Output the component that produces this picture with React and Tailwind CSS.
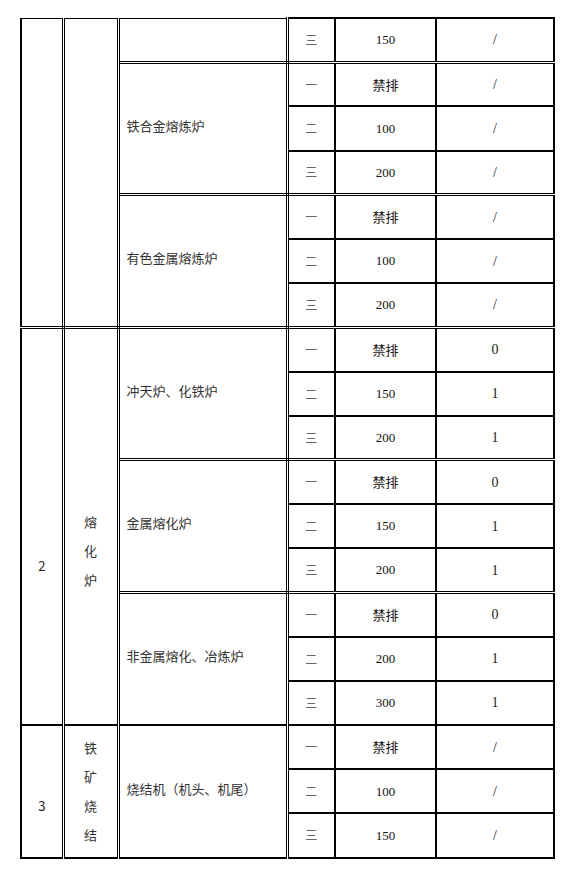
import React from 'react';

const dash = [['一', '禁排', '/'], ['二', '100', '/'], ['三', '200', '/']];

const groups = [
    {
        num: '',
        cat: '',
        first: true,
        items: [
            { name: '', rows: [['三', '150', '/']] },
            { name: '铁合金熔炼炉', rows: dash },
            { name: '有色金属熔炼炉', rows: dash },
        ],
    },
    {
        num: '2',
        cat: '熔化炉',
        numPad: 'pt-[78px]',
        catPad: 'pt-[48px]',
        items: [
            { name: '冲天炉、化铁炉', rows: [['一', '禁排', '0'], ['二', '150', '1'], ['三', '200', '1']] },
            { name: '金属熔化炉', rows: [['一', '禁排', '0'], ['二', '150', '1'], ['三', '200', '1']] },
            { name: '非金属熔化、冶炼炉', rows: [['一', '禁排', '0'], ['二', '200', '1'], ['三', '300', '1']] },
        ],
    },
    {
        num: '3',
        cat: '铁矿烧结',
        last: true,
        numPad: 'pt-[28px]',
        catPad: '',
        items: [
            { name: '烧结机（机头、机尾）', rows: [['一', '禁排', '/'], ['二', '100', '/'], ['三', '150', '/']] },
        ],
    },
];

const cjk = "font-['Noto_Sans_CJK_SC','Noto_Sans',sans-serif]";
const serif = "font-['Liberation_Serif','Noto_Sans_CJK_SC',serif]";

// left columns use Word-style double rules, right columns single thick rules
const leftCell = 'border-[3px] border-double border-black';
const rightCell = 'border-2 border-solid border-black h-[44.2px] text-center';

export default function App() {
    const body = [];
    groups.forEach((g, gi) => {
        const span = g.items.reduce((n, it) => n + it.rows.length, 0);
        const edgeTop = g.first ? 'border-t [border-top-style:solid]' : '';
        const lastBottom = gi === 1 || g.last ? 'border-b-2 [border-bottom-style:solid]' : '';
        const lastTop = g.last ? 'border-t-2 [border-top-style:solid]' : '';
        let rowIndex = 0;
        g.items.forEach((it, ii) => {
            it.rows.forEach((r, ri) => {
                const groupStart = ri === 0 && !(ii === 0 && (g.first || g.last));
                const dbl = groupStart ? 'border-t-[3px] [border-top-style:double]' : '';
                const top = g.first && rowIndex === 0 ? 'border-t-2' : '';
                body.push(
                    <tr key={`${gi}-${ii}-${ri}`}>
                        {rowIndex === 0 && (
                            <td
                                rowSpan={span}
                                className={`${leftCell} ${edgeTop} ${lastBottom} ${lastTop} border-l-2 [border-left-style:solid] text-center align-middle ${g.numPad || ''} ${cjk} text-[13px] text-[#222]`}
                            >
                                {g.num}
                            </td>
                        )}
                        {rowIndex === 0 && (
                            <td
                                rowSpan={span}
                                className={`${leftCell} ${edgeTop} ${lastBottom} ${lastTop} text-center align-middle ${g.catPad || ''} ${cjk} text-[13px] text-[#333]`}
                            >
                                <div className="flex flex-col items-center gap-[12px] leading-[17px]">
                                    {g.cat.split('').map((c, ci) => (
                                        <span key={ci}>{c}</span>
                                    ))}
                                </div>
                            </td>
                        )}
                        {ri === 0 && (
                            <td
                                rowSpan={it.rows.length}
                                className={`${leftCell} ${edgeTop} ${ii === g.items.length - 1 ? lastBottom : ''} ${ii === 0 ? lastTop : ''} align-middle pl-[7px] pb-[6px] ${cjk} text-[13px] text-[#333]`}
                            >
                                {it.name}
                            </td>
                        )}
                        <td className={`${rightCell} ${dbl} ${top} ${cjk} text-[12px] text-[#666]`}>{r[0]}</td>
                        <td className={`${rightCell} ${dbl} ${top} ${/\d/.test(r[1]) ? serif : cjk} text-[13px] text-[#111]`}>{r[1]}</td>
                        <td className={`${rightCell} ${dbl} ${top} ${serif} text-[14px] text-[#222]`}>{r[2]}</td>
                    </tr>
                );
                rowIndex++;
            });
        });
    });

    return (
        <div className="min-h-screen bg-white pt-[17px] pl-[20px]">
            <table className="table-fixed border-collapse w-[533px]">
                <colgroup>
                    <col className="w-[42px]" />
                    <col className="w-[55px]" />
                    <col className="w-[169px]" />
                    <col className="w-[48px]" />
                    <col className="w-[101px]" />
                    <col className="w-[118px]" />
                </colgroup>
                <tbody>{body}</tbody>
            </table>
        </div>
    );
}
